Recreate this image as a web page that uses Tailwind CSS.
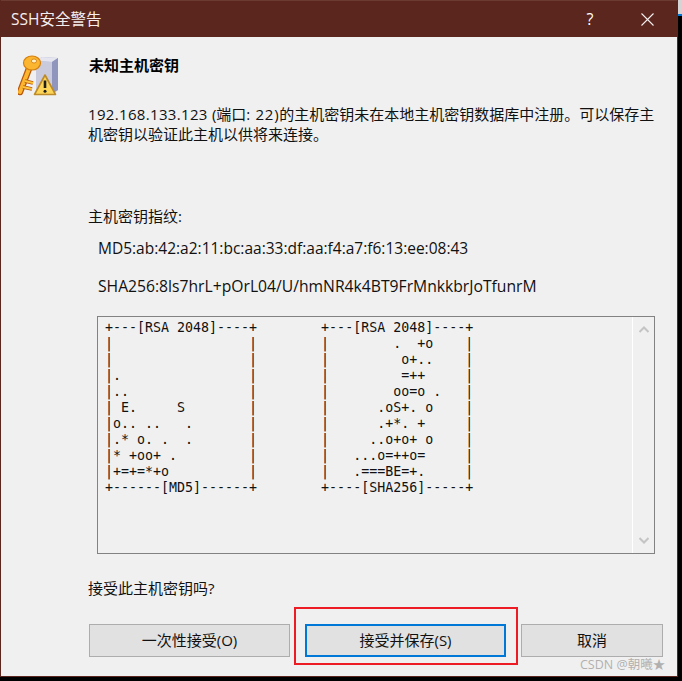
<!DOCTYPE html>
<html lang="zh-CN">
<head>
    <meta charset="UTF-8">
    <title>SSH安全警告</title>
    <script src="https://cdn.jsdelivr.net/npm/@tailwindcss/browser@4"></script>
</head>
<body class="relative bg-black h-[681px] w-[682px] overflow-hidden font-['Open_Sans','Noto_Sans_CJK_SC',sans-serif] text-[15px] text-[#111]">
    <!-- Sliver of the window behind -->
    <div class="absolute left-[678px] top-0 w-[4px] h-[14px] bg-[#d4d4d4]"></div>
    <div class="absolute left-[678px] top-[14px] w-[4px] h-[2px] bg-[#0078d7]"></div>

    <!-- Dialog -->
    <div class="relative w-[678px] h-[677px] flex flex-col border-x border-b border-[#5a261d]">
        <!-- Title bar -->
        <div class="h-[37px] shrink-0 bg-[#5a261d] border-t border-[#6b3a30] text-white flex items-center pl-[10px]">
            <span class="text-[15.5px] text-[#f5eeee] mt-[1px]">SSH安全警告</span>
            <span class="ml-auto w-[14px] text-center text-[16px] mr-[44px]">?</span>
            <svg class="mr-[23px]" width="13" height="13" viewBox="0 0 13 13" fill="none" stroke="#f4eeee" stroke-width="1.1"><path d="M0.5 0.5 12.5 12.5M12.5 0.5 0.5 12.5"/></svg>
        </div>

        <!-- Body -->
        <div class="flex-1 bg-[#f0f0f0] flex flex-col">
            <div class="flex pl-[17px] pt-[12px]">
                <!-- Key icon -->
                <svg class="shrink-0 mt-[6px]" width="42" height="42" viewBox="0 0 42 42">
                    <path d="M18 6 24 2 40 3 40 35 36 38 18 38Z" fill="#a9aed0"/>
                    <path d="M18 6 24 2 40 3 34 7Z" fill="#e4e5ee"/>
                    <path d="M18 6 34 7 34 38 18 38Z" fill="#c9cbdd"/>
                    <path d="M34 7 40 3 40 35 34 38Z" fill="#8f95bd"/>
                    <path d="M12 11 2 37" stroke="#b8560a" stroke-width="6.5" stroke-linecap="round"/>
                    <path d="M12 11 2 37" stroke="#fbb52e" stroke-width="4" stroke-linecap="round"/>
                    <path d="M7 26 15 28M5 32 14 34" stroke="#b8560a" stroke-width="3.4"/>
                    <path d="M7 26 15 28M5 32 14 34" stroke="#fdc53c" stroke-width="2"/>
                    <ellipse cx="14" cy="8" rx="8.5" ry="7" fill="#fbb52e" stroke="#d5800f" stroke-width="1.2"/>
                    <ellipse cx="16" cy="6" rx="2.6" ry="2" fill="#fff2c4" stroke="#cf7a10" stroke-width=".8"/>
                    <path d="M27 20 37.5 39.5H16.5Z" fill="#fcd558" stroke="#bd8a2a" stroke-width="1.6" stroke-linejoin="round"/>
                    <path d="M27 25.5v7.5" stroke="#1f1f1f" stroke-width="2.6"/>
                    <circle cx="27" cy="36.2" r="1.5" fill="#1f1f1f"/>
                </svg>
                <div class="ml-[29px] pt-[6px] font-bold leading-[20px] text-black">未知主机密钥</div>
            </div>

            <div class="ml-[87px] mt-[7px] leading-[20px]">
                <div class="flex whitespace-pre">
                    <span class="tracking-[0.33px]">192.168.133.123 </span>
                    <span>(端口</span>
                    <span class="tracking-[0.7px]">: 22)</span>
                    <span>的主机密钥未在本地主机密钥数据库中注册。可以保存主</span>
                </div>
                <div>机密钥以验证此主机以供将来连接。</div>
            </div>

            <p class="ml-[87px] mt-[62px] leading-[21px]">主机密钥指纹:</p>
            <p class="ml-[97px] mt-[11px] leading-[21px] text-[15.5px]">MD5:ab:42:a2:11:bc:aa:33:df:aa:f4:a7:f6:13:ee:08:43</p>
            <p class="ml-[97px] mt-[17px] leading-[21px] text-[15.7px]">SHA256:8ls7hrL+pOrL04/U/hmNR4k4BT9FrMnkkbrJoTfunrM</p>

            <!-- Randomart box -->
            <div class="ml-[96px] mt-[19px] w-[558px] h-[238px] border border-[#828282] flex">
                <div class="flex-1 flex pl-[7px] pt-[3px] gap-[64px]">
<pre class="font-['DejaVu_Sans_Mono',monospace] text-[13.3px] leading-[16px]">+---[RSA 2048]----+
|                 |
|                 |
|.                |
|..               |
| E.     S        |
|o.. ..   .       |
|.* o. .  .       |
|* +oo+ .         |
|+=+=*+o          |
+------[MD5]------+</pre>
<pre class="font-['DejaVu_Sans_Mono',monospace] text-[13.3px] leading-[16px]">+---[RSA 2048]----+
|        .  +o    |
|         o+..    |
|         =++     |
|        oo=o .   |
|      .oS+. o    |
|      .+*. +     |
|     ..o+o+ o    |
|   ...o=++o=     |
|   .===BE=+.     |
+----[SHA256]-----+</pre>
                </div>
                <!-- Scrollbar -->
                <div class="w-[22px] border-l border-white flex flex-col items-center justify-between py-[9px]">
                    <svg width="10" height="7" viewBox="0 0 10 7" fill="none" stroke="#c4c4c4" stroke-width="2"><path d="M0.5 6 5 1.5 9.5 6"/></svg>
                    <svg width="10" height="7" viewBox="0 0 10 7" fill="none" stroke="#c4c4c4" stroke-width="2"><path d="M0.5 1 5 5.5 9.5 1"/></svg>
                </div>
            </div>

            <p class="ml-[87px] mt-[24px] leading-[21px]">接受此主机密钥吗?</p>

            <!-- Buttons -->
            <div class="flex ml-[88px] mt-[25px]">
                <button class="w-[201px] h-[33px] bg-[#e1e1e1] border border-[#adadad]">一次性接受(O)</button>
                <button class="ml-[15px] w-[201px] h-[33px] bg-[#e1e1e1] border-2 border-[#0078d7]">接受并保存(S)</button>
                <button class="ml-[15px] w-[142px] h-[33px] bg-[#e1e1e1] border border-[#adadad]">取消</button>
            </div>
        </div>

        <!-- Red annotation -->
        <div class="absolute left-[293px] top-[607px] w-[224px] h-[58px] border-2 border-[#ed1c24]"></div>
        <!-- Watermark -->
        <span class="absolute left-[579px] top-[656px] text-[12.5px] leading-[18px] text-[#b0b0b0]">CSDN @朝曦★</span>
    </div>
</body>
</html>
